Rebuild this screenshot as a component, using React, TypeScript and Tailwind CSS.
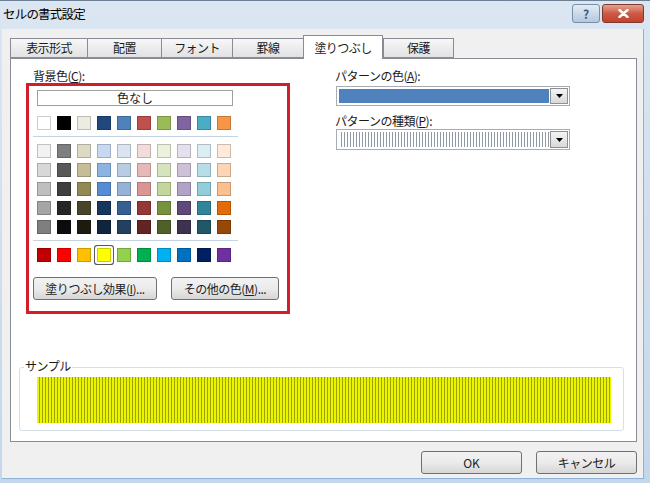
import React from "react";

const themeTop = ["#ffffff", "#000000", "#eeece1", "#1f497d", "#4f81bd", "#c0504d", "#9bbb59", "#8064a2", "#4bacc6", "#f79646"];

const themeShades = [
  ["#f2f2f2", "#7f7f7f", "#ddd9c3", "#c6d9f0", "#dbe5f1", "#f2dcdb", "#ebf1dd", "#e5e0ec", "#dbeef3", "#fdeada"],
  ["#d8d8d8", "#595959", "#c4bd97", "#8db3e2", "#b8cce4", "#e5b9b7", "#d7e3bc", "#ccc1d9", "#b7dde8", "#fbd5b5"],
  ["#bfbfbf", "#3f3f3f", "#938953", "#548dd4", "#95b3d7", "#d99694", "#c3d69b", "#b2a2c7", "#92cddc", "#fac08f"],
  ["#a5a5a5", "#262626", "#494429", "#17365d", "#366092", "#953734", "#76923c", "#5f497a", "#31859b", "#e36c09"],
  ["#7f7f7f", "#0c0c0c", "#1d1b10", "#0f243e", "#244061", "#632423", "#4f6128", "#3f3151", "#205867", "#974806"],
];

const standard = ["#c00000", "#ff0000", "#ffc000", "#ffff00", "#92d050", "#00b050", "#00b0f0", "#0070c0", "#002060", "#7030a0"];

const tabs = [
  { label: "表示形式", w: "w-[78px]" },
  { label: "配置", w: "w-[75px]" },
  { label: "フォント", w: "w-[72px]" },
  { label: "罫線", w: "w-[72px]" },
  { label: "塗りつぶし", w: "w-[80px]", active: true },
  { label: "保護", w: "w-[71px]" },
];

function Swatch({ color, selected }: { color: string; selected?: boolean }) {
  return (
    <div
      className={
        selected
          ? "h-[14px] w-[14px] border border-black/20 rounded-[1px] shadow-[0_0_0_2px_#fff,0_0_0_3px_#5a5a5a]"
          : "h-[14px] w-[14px] border border-black/20"
      }
      style={{ backgroundColor: color }}
    />
  );
}

function SwatchRow({ colors, selected }: { colors: string[]; selected?: number }) {
  return (
    <div className="flex gap-x-[6px]">
      {colors.map((c, i) => (
        <Swatch key={i} color={c} selected={i === selected} />
      ))}
    </div>
  );
}

function DropArrow() {
  return (
    <div className="flex h-full w-[18px] items-center justify-center border border-[#8e8f8f] bg-gradient-to-b from-[#f4f4f4] to-[#d9d9d9]">
      <svg width="7" height="4" viewBox="0 0 7 4">
        <path d="M0 0h7L3.5 4z" fill="#000" />
      </svg>
    </div>
  );
}

function PushButton({ children, className }: { children: React.ReactNode; className: string }) {
  return (
    <div
      className={
        "flex h-[23px] items-center justify-center rounded-[3px] border border-[#707070] bg-gradient-to-b from-[#f2f2f2] via-[#ebebeb] to-[#d6d6d6] text-[12px] leading-none text-[#222] " +
        className
      }
    >
      {children}
    </div>
  );
}

export default function App() {
  return (
    <div className="flex h-[483px] w-[650px] flex-col bg-gradient-to-b from-[#dbe6f2] to-[#c3d7ec] font-['Noto_Sans_CJK_JP',sans-serif] text-[#1a1a1a]">
      {/* Title bar */}
      <div className="flex h-[29px] shrink-0 items-start border-t border-[#6d7f93]">
        <div className="mt-[4px] pl-[3px] text-[12.5px] leading-[18px] tracking-[-0.8px] text-black">セルの書式設定</div>
        <div className="ml-auto mr-[6px] mt-[3px] flex gap-[2px]">
          <div className="flex h-[19px] w-[28px] items-center justify-center rounded-[3px] border border-[#7a8ea6] bg-gradient-to-b from-[#e3ecf6] to-[#b3c8df] text-[12px] font-bold leading-none text-[#3d5878]">
            ?
          </div>
          <div className="flex h-[19px] w-[42px] items-center justify-center rounded-[3px] border border-[#7d3a2c] bg-gradient-to-b from-[#e3a38f] via-[#cd5a45] to-[#c3412a]">
            <svg width="11" height="9" viewBox="0 0 11 9">
              <path d="M1.5 1l8 7M9.5 1l-8 7" stroke="#fff" strokeWidth="2.4" strokeLinecap="round" />
            </svg>
          </div>
        </div>
      </div>

      {/* Client area */}
      <div className="mb-[4px] ml-[2px] mr-[6px] flex flex-1 flex-col border-b border-r border-[#8fb2d4] bg-[#f0f0f0] pl-[8px]">
        {/* Tabs */}
        <div className="mt-[6px] flex h-[23px] items-end">
          {tabs.map((t) =>
            t.active ? (
              <div
                key={t.label}
                className={`${t.w} relative z-10 -mb-px flex h-[24px] items-center justify-center border border-b-0 border-[#898c95] bg-white text-[12px] leading-none tracking-[-0.6px]`}
              >
                {t.label}
              </div>
            ) : (
              <div
                key={t.label}
                className={`${t.w} -mr-px flex h-[20px] items-center justify-center border border-[#898c95] bg-gradient-to-b from-[#f7f7f7] to-[#e2e2e2] text-[12px] leading-none tracking-[-0.6px]`}
              >
                {t.label}
              </div>
            )
          )}
        </div>

        {/* Panel */}
        <div className="flex h-[384px] w-[627px] flex-col border border-[#898c95] bg-white pt-[10px]">
          <div className="flex">
            {/* Background colour */}
            <div className="ml-[15px] flex w-[264px] flex-col">
              <div className="h-[14px] pl-[7px] text-[12px] leading-[14px] tracking-[-0.5px]">
                背景色(<span className="underline">C</span>):
              </div>
              <div className="flex h-[231px] flex-col border-[3px] border-[#d01f2a] px-[4px] pt-[4px]">
                <div className="ml-[4px] flex h-[16px] w-[196px] items-center justify-center border border-[#a0a0a0] text-[12px] leading-none">
                  色なし
                </div>
                <div className="ml-[4px] mt-[10px]">
                  <SwatchRow colors={themeTop} />
                </div>
                <div className="mt-[6px] h-px w-[205px] bg-[#c5d3e2]" />
                <div className="ml-[4px] mt-[7px] flex flex-col gap-y-[5px]">
                  {themeShades.map((row, i) => (
                    <SwatchRow key={i} colors={row} />
                  ))}
                </div>
                <div className="mt-[6px] h-px w-[205px] bg-[#c5d3e2]" />
                <div className="ml-[4px] mt-[7px]">
                  <SwatchRow colors={standard} selected={3} />
                </div>
                <div className="mt-[15px] flex gap-[14px]">
                  <PushButton className="w-[124px] tracking-[-0.5px]">
                    塗りつぶし効果(<span className="underline">I</span>)...
                  </PushButton>
                  <PushButton className="w-[108px] tracking-[-0.5px]">
                    その他の色(<span className="underline">M</span>)...
                  </PushButton>
                </div>
              </div>
            </div>

            {/* Pattern */}
            <div className="ml-[45px] flex flex-col">
              <div className="h-[14px] text-[12px] leading-[14px] tracking-[-0.5px]">
                パターンの色(<span className="underline">A</span>):
              </div>
              <div className="ml-px mt-[3px] flex h-[20px] w-[234px] items-stretch border border-[#a5acb5] bg-white p-px">
                <div className="m-px flex-1 bg-[#4f81bd]" />
                <DropArrow />
              </div>
              <div className="mt-[8px] h-[14px] text-[12px] leading-[14px] tracking-[-0.5px]">
                パターンの種類(<span className="underline">P</span>):
              </div>
              <div className="ml-px mt-[1px] flex h-[21px] w-[234px] items-stretch border border-[#a5acb5] bg-white p-px">
                <div className="m-px flex-1 bg-[repeating-linear-gradient(90deg,#ffffff_0px,#ffffff_2px,#8e9aa6_2px,#8e9aa6_3px)]" />
                <DropArrow />
              </div>
            </div>
          </div>

          {/* Sample */}
          <div className="relative ml-[8px] mr-[12px] mt-[53px] h-[64px] rounded-[3px] border border-[#d5dfe5] px-[17px] pt-[9px]">
            <div className="absolute -top-[10px] left-[4px] bg-white px-px text-[12px] leading-[16px] tracking-[-0.5px]">
              サンプル
            </div>
            <div className="h-[46px] w-[574px] bg-[repeating-linear-gradient(90deg,#ecf500_0px,#ecf500_2px,#9ea300_2px,#9ea300_3px)]" />
          </div>
        </div>

        {/* Dialog buttons */}
        <div className="mt-[9px] flex w-[627px] justify-end gap-[14px]">
          <PushButton className="w-[101px]">OK</PushButton>
          <PushButton className="w-[101px] tracking-[-0.5px]">キャンセル</PushButton>
        </div>
      </div>
    </div>
  );
}
